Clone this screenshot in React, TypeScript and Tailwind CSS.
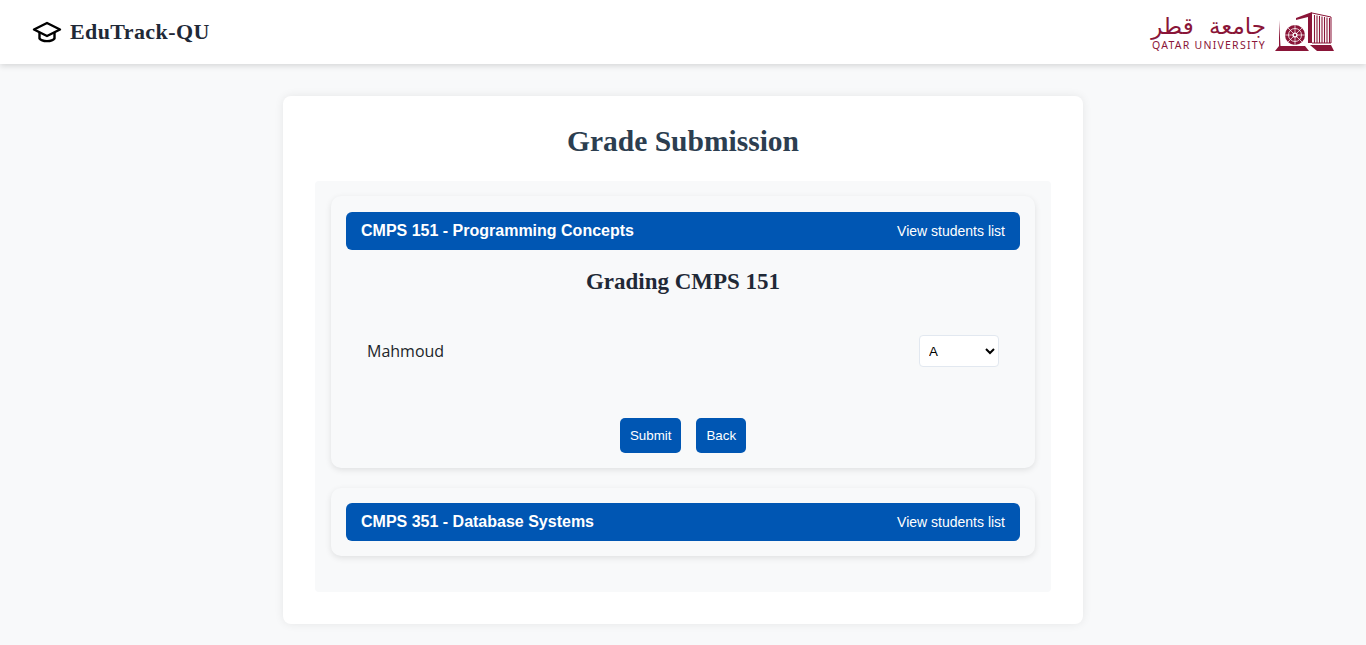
import { useState } from "react"

const serif = "font-['Liberation_Serif',serif]"

function Logo() {
  return (
    <div className="flex items-center gap-[9px]">
      <div className="flex flex-col items-end">
        <span dir="rtl" className="block font-['DejaVu_Sans',sans-serif] text-[23px] leading-[25px] [word-spacing:8px] text-[#8a1538]">جامعة قطر</span>
        <span className="block font-['Noto_Sans',sans-serif] text-[10.5px] leading-[12px] tracking-[1.25px] text-[#8a1538]">QATAR UNIVERSITY</span>
      </div>
      <svg width="60" height="40" viewBox="0 0 60 40" fill="none">
        <path d="M0 39 L4 34 V8 L5.5 34 H30 L34 39Z" fill="#8a1538" />
        <path d="M21 6 L37 0 V31 H33 V5 L21 8Z" fill="#8a1538" />
        <path d="M35 33 H56 L59 39 H42Z" fill="#8a1538" />
        <path d="M37 1 L56 5 V31 H37" stroke="#8a1538" strokeWidth="1" />
        <path d="M39.5 3 V31 M42 3.5 V31 M44.5 4 V31 M47 4.5 V31 M49.5 5 V31 M52 5.5 V31 M54.5 6 V31" stroke="#8a1538" strokeWidth="1.1" />
        <circle cx="20" cy="23" r="10" fill="#8a1538" />
        <circle cx="20" cy="23" r="6.5" fill="none" stroke="#fff" strokeWidth="0.8" />
        <path d="M20 13 V33 M10 23 H30 M13 16 L27 30 M27 16 L13 30" stroke="#fff" strokeWidth="0.7" />
        <circle cx="20" cy="23" r="2.6" fill="#fff" />
        <circle cx="20" cy="23" r="1.2" fill="#8a1538" />
      </svg>
    </div>
  )
}

function CourseBar({ title }: { title: string }) {
  return (
    <div className="flex h-[38px] items-center justify-between rounded-[6px] bg-[#0056b3] px-[15px] text-white">
      <span className="text-[16px] font-bold">{title}</span>
      <span className="text-[14px]">View students list</span>
    </div>
  )
}

export default function App() {
  const [grade, setGrade] = useState("A")

  return (
    <div className="min-h-[645px] bg-[#f8f9fa] font-['Liberation_Sans',sans-serif]">
      <header className="flex h-[64px] items-center justify-between bg-white pl-[32px] pr-[31px] shadow-[0_2px_6px_rgba(0,0,0,0.14)]">
        <div className="flex items-center gap-[8px]">
          <svg width="30" height="24" viewBox="0 0 30 24" fill="none" stroke="#000" strokeWidth="2.4" strokeLinejoin="round" strokeLinecap="round">
            <path d="M15 3 L28 9.5 L15 16 L2 9.5Z" />
            <path d="M7.5 13 V18.5 C10 22 20 22 22.5 18.5 V13" />
          </svg>
          <span className={`${serif} mb-[2px] text-[22px] font-bold tracking-[0.4px] text-[#1f2937]`}>EduTrack-QU</span>
        </div>
        <Logo />
      </header>

      <main className="flex justify-center pt-[32px]">
        <div className="h-[528px] w-[800px] rounded-[8px] bg-white px-[32px] pt-[25px] shadow-[0_0_10px_rgba(0,0,0,0.08)]">
          <h1 className={`${serif} mb-[20px] text-center text-[29.5px] leading-[40px] font-bold text-[#2c3e50]`}>Grade Submission</h1>
          <div className="h-[411px] rounded-[4px] bg-[#f8f9fa] px-[16px] pt-[15px]">
            <section className="h-[272px] rounded-[10px] bg-[#f8f9fa] p-[15px] pt-[16px] shadow-[0_2px_6px_rgba(0,0,0,0.1)]">
              <CourseBar title="CMPS 151 - Programming Concepts" />
              <h2 className={`${serif} mt-[16px] text-center text-[23px] leading-[32px] font-bold text-[#1f2937]`}>Grading CMPS 151</h2>
              <div className="mt-[37px] flex items-center justify-between px-[21px]">
                <span className="font-['Open_Sans',sans-serif] text-[16px] text-[#212529]">Mahmoud</span>
                <select
                  value={grade}
                  onChange={(e) => setGrade(e.target.value)}
                  className="h-[32px] w-[80px] rounded-[4px] border border-[#e2e8f0] bg-white pl-[5px] text-[13.33px] text-black"
                >
                  <option>A</option>
                  <option>B</option>
                  <option>C</option>
                  <option>D</option>
                  <option>F</option>
                </select>
              </div>
              <div className="mt-[51px] flex justify-center gap-[15px]">
                <button className="h-[35px] rounded-[5px] bg-[#0056b3] px-[10px] text-[13.33px] text-white">Submit</button>
                <button className="h-[35px] rounded-[5px] bg-[#0056b3] px-[10px] text-[13.33px] text-white">Back</button>
              </div>
            </section>
            <section className="mt-[20px] h-[68px] rounded-[10px] bg-[#f8f9fa] p-[15px] shadow-[0_2px_6px_rgba(0,0,0,0.1)]">
              <CourseBar title="CMPS 351 - Database Systems" />
            </section>
          </div>
        </div>
      </main>
    </div>
  )
}
